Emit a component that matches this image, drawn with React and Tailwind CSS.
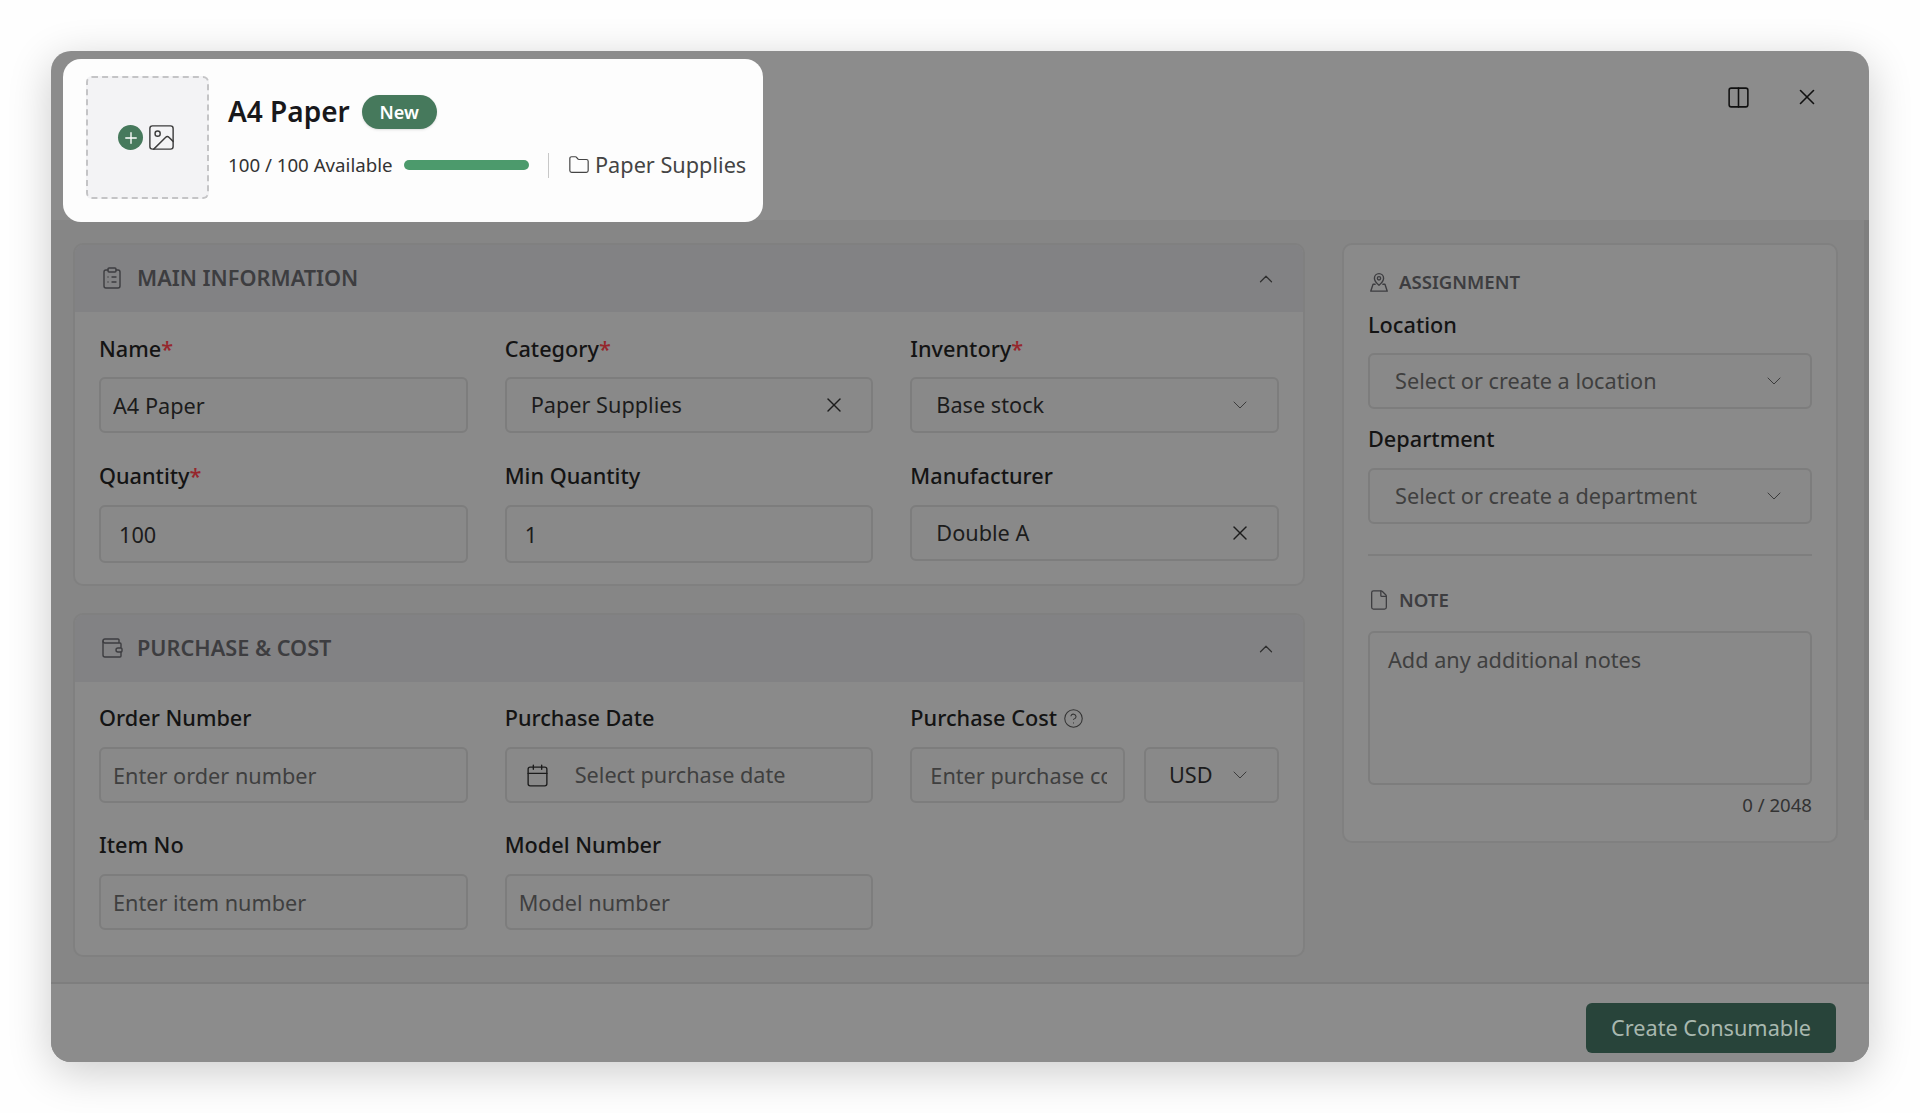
import React from "react";
import { ClipboardList, Wallet, File, Columns2, X, ChevronUp, ChevronDown, Calendar, CircleHelp, Folder, Image, Plus } from "lucide-react";

const Label = ({ children, req, extra }) => (
  <div className="h-[30px] flex items-center text-[21.7px] font-medium text-[#141414] leading-none">
    {children}
    {req && <span className="text-[#96262c]">*</span>}
    {extra}
  </div>
);

const boxCls = "h-[56px] rounded-[6px] border-2 border-[#7d7d7d] bg-[#898989] text-[21.7px] text-[#1c1c1c] flex items-center";

const TextField = ({ value, placeholder, pad = "pl-[12px]", h = "h-[56px]" }) => (
  <input
    readOnly
    value={value || ""}
    placeholder={placeholder}
    className={`${h} w-full min-w-0 rounded-[6px] border-2 border-[#7d7d7d] bg-[#898989] text-[21.7px] text-[#1c1c1c] placeholder:text-[#3f3f3f] outline-none pr-4 ${pad}`}
  />
);

const SelectField = ({ value, placeholder, clear, pad = "pl-[24px] pr-[25px]" }) => (
  <div className={`${boxCls} w-full justify-between ${pad}`}>
    <span className={value ? "text-[#1c1c1c]" : "text-[#3f3f3f]"}>{value || placeholder}</span>
    {clear ? <X size={24} strokeWidth={1.4} color="#1c1c1c" /> : <ChevronDown size={24} strokeWidth={1} color="#3c3c3c" />}
  </div>
);

const Section = ({ icon, title, children, bodyCls }) => (
  <section className="rounded-[10px] border-2 border-[#808080] bg-[#8a8a8a] overflow-hidden">
    <header className="h-[67px] bg-[#828284] flex items-center pl-[25px] pr-[26px] justify-between">
      <div className="flex items-center gap-[13px] text-[#3d3d40]">
        {icon}
        <span className="text-[21.7px] font-semibold">{title}</span>
      </div>
      <ChevronUp size={22} strokeWidth={1.3} color="#2f2f2f" />
    </header>
    <div className={`px-[24px] grid grid-cols-3 gap-x-[37px] ${bodyCls}`}>{children}</div>
  </section>
);

const PinIcon = () => (
  <svg width="22" height="22" viewBox="0 0 24 24" fill="none" stroke="#3d3d40" strokeWidth="1.5" strokeLinecap="round" strokeLinejoin="round">
    <path d="M12 15.5c-2.8-2.2-5-4.6-5-7.6a5 5 0 0 1 10 0c0 3-2.2 5.4-5 7.6Z" />
    <circle cx="12" cy="8" r="1.8" />
    <path d="M7.8 14.5H5.5L3 22h18l-2.5-7.5h-2.3" />
  </svg>
);

export default function App() {
  return (
    <div className="w-full h-[1113px] overflow-hidden bg-[#fefefe] pt-[51px] pl-[51px] font-['Noto_Sans',sans-serif]">
      <div className="relative w-[1818px] h-[1011px] rounded-[20px] bg-[#8c8c8c] shadow-[0_10px_44px_rgba(0,0,0,0.2)] flex flex-col overflow-hidden">
        {/* Header */}
        <div className="h-[169px] shrink-0 flex justify-between items-start pl-[12px] pt-[8px] pr-[49px]">
          <div className="relative z-10 w-[700px] h-[163px] rounded-[18px] bg-[#fdfdfd] flex items-center pl-[23px] gap-[19px]">
            <div className="self-start mt-[17px] w-[123px] h-[123px] rounded-[6px] border-2 border-dashed border-[#c4c4c6] bg-[#f3f3f5] flex items-center justify-center gap-[3px]">
              <span className="w-[25px] h-[25px] rounded-full bg-[#46795c] flex items-center justify-center">
                <Plus size={18} strokeWidth={1.8} color="#fff" />
              </span>
              <Image size={31} strokeWidth={1.1} color="#3c3c3c" />
            </div>
            <div className="flex flex-col gap-[20px] pb-[7px]">
              <div className="flex items-center gap-[12px]">
                <span className="text-[28px] leading-[36px] font-semibold text-[#18181b]">A4 Paper</span>
                <span className="mt-[3px] h-[34px] w-[75px] rounded-full bg-[#46795c] text-white text-[18px] font-semibold flex items-center justify-center shadow-sm">New</span>
              </div>
              <div className="flex items-center">
                <span className="text-[18.7px] text-[#333] w-[176px]">100 / 100 Available</span>
                <span className="w-[125px] h-[10px] rounded-full bg-[#4c9a6c]" />
                <span className="w-px h-[25px] bg-[#c8c8c8] ml-[19px] mr-[19px]" />
                <Folder size={22} strokeWidth={1.3} color="#444" />
                <span className="ml-[5px] text-[21.7px] text-[#444]">Paper Supplies</span>
              </div>
            </div>
          </div>
          <div className="flex items-center gap-[43px] pt-[25px]">
            <Columns2 size={25} strokeWidth={1.5} color="#111" />
            <X size={26} strokeWidth={1.5} color="#111" />
          </div>
        </div>

        {/* Body */}
        <div className="flex-1 bg-[#868686] flex items-start gap-[37px] pl-[22px] pt-[23px]">
          <div className="w-[1232px] flex flex-col gap-[27px]">
            <Section
              title="MAIN INFORMATION"
              icon={<ClipboardList size={24} strokeWidth={1.4} color="#3d3d40" />}
              bodyCls="pt-[22px] pb-[21px] gap-y-[29px]"
            >
              <div className="flex flex-col gap-[13px]"><Label req>Name</Label><TextField value="A4 Paper" /></div>
              <div className="flex flex-col gap-[13px]"><Label req>Category</Label><SelectField value="Paper Supplies" clear /></div>
              <div className="flex flex-col gap-[13px]"><Label req>Inventory</Label><SelectField value="Base stock" /></div>
              <div className="-mt-px flex flex-col gap-[14px]"><Label req>Quantity</Label><TextField value="100" pad="pl-[18px]" h="h-[58px]" /></div>
              <div className="-mt-px flex flex-col gap-[14px]"><Label>Min Quantity</Label><TextField value="1" pad="pl-[18px]" h="h-[58px]" /></div>
              <div className="-mt-px flex flex-col gap-[14px]"><Label>Manufacturer</Label><SelectField value="Double A" clear /></div>
            </Section>
            <Section
              title="PURCHASE & COST"
              icon={<Wallet size={24} strokeWidth={1.4} color="#3d3d40" />}
              bodyCls="pt-[21px] pb-[25px] gap-y-[27px]"
            >
              <div className="flex flex-col gap-[14px]"><Label>Order Number</Label><TextField placeholder="Enter order number" /></div>
              <div className="flex flex-col gap-[14px]">
                <Label>Purchase Date</Label>
                <div className={`${boxCls} w-full pl-[18px]`}>
                  <Calendar size={25} strokeWidth={1.3} color="#1c1c1c" />
                  <span className="ml-[25px] text-[#3f3f3f]">Select purchase date</span>
                </div>
              </div>
              <div className="flex flex-col gap-[14px]">
                <Label extra={<CircleHelp size={21} strokeWidth={1.2} color="#333" className="ml-[6px]" />}>Purchase Cost</Label>
                <div className="flex gap-[19px]">
                  <TextField placeholder="Enter purchase cost" pad="pl-[18px]" />
                  <div className={`${boxCls} w-[135px] shrink-0 pl-[23px] pr-[25px] justify-between`}>
                    <span>USD</span>
                    <ChevronDown size={24} strokeWidth={1} color="#3c3c3c" />
                  </div>
                </div>
              </div>
              <div className="flex flex-col gap-[14px]"><Label>Item No</Label><TextField placeholder="Enter item number" /></div>
              <div className="flex flex-col gap-[14px]"><Label>Model Number</Label><TextField placeholder="Model number" /></div>
            </Section>
          </div>

          <aside className="w-[496px] h-[600px] rounded-[10px] border-2 border-[#808080] bg-[#8a8a8a] pl-[24px] pr-[24px] pt-[22px]">
            <div className="h-[30px] flex items-center gap-[9px] text-[18.6px] font-semibold text-[#3d3d40]"><PinIcon />ASSIGNMENT</div>
            <div className="mt-[13px]"><Label>Location</Label></div>
            <div className="mt-[13px]"><SelectField placeholder="Select or create a location" pad="pl-[25px] pr-[24px]" /></div>
            <div className="mt-[15px]"><Label>Department</Label></div>
            <div className="mt-[14px]"><SelectField placeholder="Select or create a department" pad="pl-[25px] pr-[24px]" /></div>
            <div className="mt-[30px] h-[2px] bg-[#7e7e7e]" />
            <div className="mt-[29px] h-[30px] flex items-center gap-[9px] text-[18.6px] font-semibold text-[#3d3d40]">
              <File size={22} strokeWidth={1.4} color="#3d3d40" />NOTE
            </div>
            <textarea
              readOnly
              placeholder="Add any additional notes"
              className="mt-[16px] block w-full h-[154px] resize-none rounded-[6px] border-2 border-[#7d7d7d] bg-[#898989] pl-[18px] pt-[11px] text-[21.7px] placeholder:text-[#3f3f3f] outline-none"
            />
            <div className="mt-[6px] text-right text-[18.6px] text-[#333]">0 / 2048</div>
          </aside>
        </div>

        {/* Footer */}
        <div className="h-[80px] shrink-0 border-t-2 border-[#7e7e7e] bg-[#8c8c8c] flex justify-end items-start pt-[19px] pr-[33px]">
          <button className="w-[250px] h-[50px] rounded-[6px] bg-[#28443a] text-[21.7px] text-[#a8b8af]">Create Consumable</button>
        </div>

        {/* Scroll thumb */}
        <div className="absolute right-0 top-[169px] w-[5px] h-[600px] bg-[#7f7f7f]" />
      </div>
    </div>
  );
}
